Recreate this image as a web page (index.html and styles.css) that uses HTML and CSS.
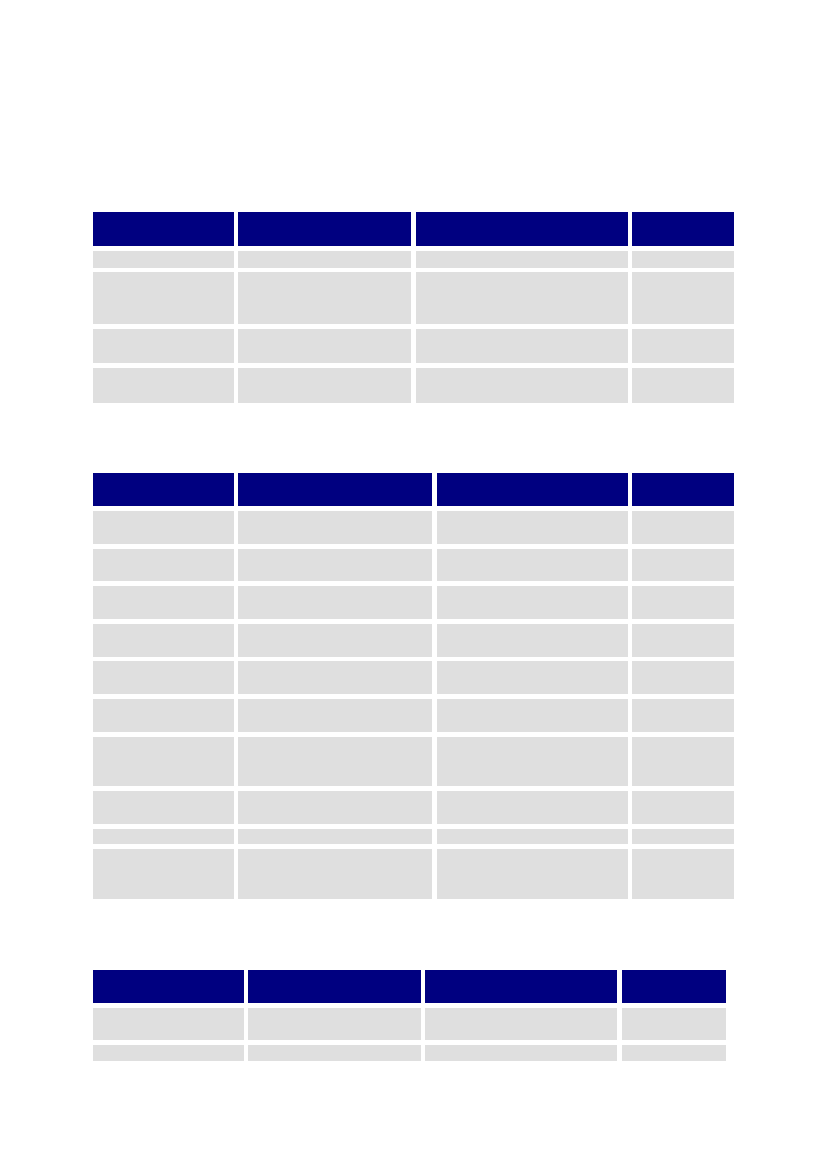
FILE: index.html
```html
<!DOCTYPE html>
<html>
<head>
<meta charset="utf-8">
<link rel="stylesheet" href="styles.css">
</head>
<body>
<div class="page">
  <div class="tbl t1">
    <div class="h"></div><div class="h"></div><div class="h"></div><div class="h"></div>
    <div class="c"></div><div class="c"></div><div class="c"></div><div class="c"></div>
    <div class="c"></div><div class="c"></div><div class="c"></div><div class="c"></div>
    <div class="c"></div><div class="c"></div><div class="c"></div><div class="c"></div>
    <div class="c"></div><div class="c"></div><div class="c"></div><div class="c"></div>
  </div>
  <div class="tbl t2">
    <div class="h"></div><div class="h"></div><div class="h"></div><div class="h"></div>
    <div class="c"></div><div class="c"></div><div class="c"></div><div class="c"></div>
    <div class="c"></div><div class="c"></div><div class="c"></div><div class="c"></div>
    <div class="c"></div><div class="c"></div><div class="c"></div><div class="c"></div>
    <div class="c"></div><div class="c"></div><div class="c"></div><div class="c"></div>
    <div class="c"></div><div class="c"></div><div class="c"></div><div class="c"></div>
    <div class="c"></div><div class="c"></div><div class="c"></div><div class="c"></div>
    <div class="c"></div><div class="c"></div><div class="c"></div><div class="c"></div>
    <div class="c"></div><div class="c"></div><div class="c"></div><div class="c"></div>
    <div class="c"></div><div class="c"></div><div class="c"></div><div class="c"></div>
    <div class="c"></div><div class="c"></div><div class="c"></div><div class="c"></div>
  </div>
  <div class="tbl t3">
    <div class="h"></div><div class="h"></div><div class="h"></div><div class="h"></div>
    <div class="c"></div><div class="c"></div><div class="c"></div><div class="c"></div>
    <div class="c"></div><div class="c"></div><div class="c"></div><div class="c"></div>
  </div>
</div>
</body>
</html>
```
FILE: styles.css
```css
html, body {
  margin: 0;
  padding: 0;
  background: #ffffff;
  font-family: "Liberation Sans", Arial, sans-serif;
}
.page {
  width: 827px;
  height: 1169px;
  box-sizing: border-box;
  padding: 212px 0 0 93px;
  display: flex;
  flex-direction: column;
  align-items: flex-start;
}
.tbl {
  display: grid;
  column-gap: 4.3px;
  row-gap: 4.6px;
}
.h {
  background: #000080;
}
.c {
  background: #dfdfdf;
}
.t1 {
  grid-template-columns: 141px 173px 212.3px 102px;
  grid-template-rows: 34px 17.3px 52px 34px 35px;
}
.t2 {
  margin-top: 70.6px;
  grid-template-columns: 141px 194px 191px 102px;
  grid-template-rows: 33.2px 33.5px 32.5px 33.5px 32.8px 33.2px 33.2px 49.8px 33.2px 15.8px 49.7px;
  row-gap: 4.5px;
}
.t3 {
  margin-top: 71px;
  grid-template-columns: 151px 172.7px 192px 104px;
  grid-template-rows: 33px 32.3px 16px;
  row-gap: 5px;
}
```
